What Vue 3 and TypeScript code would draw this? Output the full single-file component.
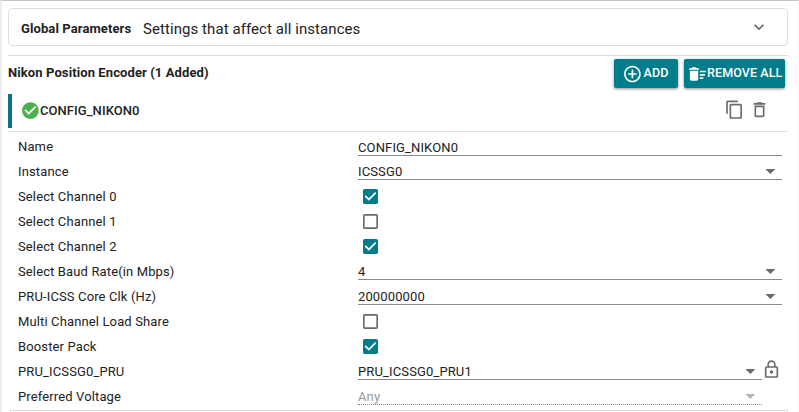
<script setup lang="ts">
interface Row {
  label: string
  kind: 'text' | 'select' | 'check'
  value?: string
  checked?: boolean
  locked?: boolean
  disabled?: boolean
  pinned?: boolean
}

const rows: Row[] = [
  { label: 'Name', kind: 'text', value: 'CONFIG_NIKON0' },
  { label: 'Instance', kind: 'select', value: 'ICSSG0' },
  { label: 'Select Channel 0', kind: 'check', checked: true },
  { label: 'Select Channel 1', kind: 'check', checked: false },
  { label: 'Select Channel 2', kind: 'check', checked: true },
  { label: 'Select Baud Rate(in Mbps)', kind: 'select', value: '4' },
  { label: 'PRU-ICSS Core Clk (Hz)', kind: 'select', value: '200000000' },
  { label: 'Multi Channel Load Share', kind: 'check', checked: false },
  { label: 'Booster Pack', kind: 'check', checked: true },
  { label: 'PRU_ICSSG0_PRU', kind: 'select', value: 'PRU_ICSSG0_PRU1', pinned: true, locked: true },
  { label: 'Preferred Voltage', kind: 'select', value: 'Any', pinned: true, disabled: true },
]

const boxOn = 'M19 3H5c-1.11 0-2 .9-2 2v14c0 1.1.89 2 2 2h14c1.11 0 2-.9 2-2V5c0-1.1-.89-2-2-2zm-9 14l-5-5 1.41-1.41L10 14.17l7.59-7.59L19 8l-9 9z'
const boxOff = 'M19 5v14H5V5h14m0-2H5c-1.1 0-2 .9-2 2v14c0 1.1.9 2 2 2h14c1.1 0 2-.9 2-2V5c0-1.1-.9-2-2-2z'
</script>

<template>
  <main class="panel">
    <section class="global">
      <strong class="global-title">Global Parameters</strong>
      <span class="global-text">Settings that affect all instances</span>
      <svg class="icon chevron" viewBox="0 0 24 24"><path d="M7.41 8.59L12 13.17l4.59-4.58L18 10l-6 6-6-6z" /></svg>
    </section>

    <header class="module">
      <h2 class="module-title">Nikon Position Encoder (1 Added)</h2>
      <button class="btn add">
        <svg class="icon" viewBox="0 0 24 24"><path d="M13 7h-2v4H7v2h4v4h2v-4h4v-2h-4V7zm-1-5C6.48 2 2 6.48 2 12s4.48 10 10 10 10-4.48 10-10S17.52 2 12 2zm0 18c-4.41 0-8-3.59-8-8s3.59-8 8-8 8 3.59 8 8-3.59 8-8 8z" /></svg>
        <span>ADD</span>
      </button>
      <button class="btn remove">
        <svg class="icon" viewBox="0 0 24 24"><path d="M15 16h4v2h-4zm0-8h7v2h-7zm0 4h6v2h-6zM3 18c0 1.1.9 2 2 2h6c1.1 0 2-.9 2-2V8H3v10zM14 5h-3l-1-1H6L5 5H2v2h12z" /></svg>
        <span>REMOVE ALL</span>
      </button>
    </header>

    <div class="instance-wrap">
      <div class="instance">
        <svg class="icon ok" viewBox="0 0 24 24"><path d="M12 2C6.48 2 2 6.48 2 12s4.48 10 10 10 10-4.48 10-10S17.52 2 12 2zm-2 15l-5-5 1.41-1.41L10 14.17l7.59-7.59L19 8l-9 9z" /></svg>
        <strong class="instance-name">CONFIG_NIKON0</strong>
        <svg class="icon copy" viewBox="0 0 24 24"><path d="M16 1H4c-1.1 0-2 .9-2 2v14h2V3h12V1zm3 4H8c-1.1 0-2 .9-2 2v14c0 1.1.9 2 2 2h11c1.1 0 2-.9 2-2V7c0-1.1-.9-2-2-2zm0 16H8V7h11v14z" /></svg>
        <svg class="icon trash" viewBox="0 0 24 24"><path d="M6 19c0 1.1.9 2 2 2h8c1.1 0 2-.9 2-2V7H6v12zM8 9h8v10H8V9zm7.5-5l-1-1h-5l-1 1H5v2h14V4z" /></svg>
      </div>
    </div>

    <div class="rows">
      <div v-for="row in rows" :key="row.label" class="row" :class="{ muted: row.disabled }">
        <label class="label">{{ row.label }}</label>
        <svg v-if="row.kind === 'check'" class="box" :class="{ on: row.checked }" viewBox="3 3 18 18">
          <path :d="row.checked ? boxOn : boxOff" />
        </svg>
        <div v-else class="field" :class="[row.kind, { pinned: row.pinned }]">
          <span class="value">{{ row.value }}</span>
          <svg v-if="row.kind === 'select'" class="caret" viewBox="0 0 24 24"><path d="M7 10l5 5 5-5z" /></svg>
        </div>
        <svg v-if="row.locked" class="icon lock" viewBox="0 0 24 24"><path d="M12 17c1.1 0 2-.9 2-2s-.9-2-2-2-2 .9-2 2 .9 2 2 2zm6-9h-1V6c0-2.76-2.24-5-5-5S7 3.24 7 6v2H6c-1.1 0-2 .9-2 2v10c0 1.1.9 2 2 2h12c1.1 0 2-.9 2-2V10c0-1.1-.9-2-2-2zM8.9 6c0-1.71 1.39-3.1 3.1-3.1s3.1 1.39 3.1 3.1v2H8.9V6zM18 20H6V10h12v10z" /></svg>
      </div>
    </div>
    <div class="next-card"></div>
  </main>
</template>

<style>
body {
  margin: 0;
  overflow: hidden;
  background: #fff;
}
</style>

<style scoped>
.panel {
  box-sizing: border-box;
  width: 799px;
  height: 412px;
  overflow: hidden;
  padding: 7px 10px 0 6px;
  border-left: 2px solid #ececec;
  border-right: 1px solid #f7f7f7;
  border-top: 1px solid #c4c4c4;
  background: #fff;
  color: #222;
  font: 13px/20px Roboto, sans-serif;
  letter-spacing: 0.13px;
}
.icon {
  flex: none;
  width: 20px;
  height: 20px;
  fill: currentColor;
}
.global {
  box-sizing: border-box;
  display: flex;
  align-items: center;
  width: 780px;
  height: 38px;
  padding: 3px 18px 0 12px;
  border: 1px solid #dedede;
  border-radius: 4px;
}
.global-title {
  width: 122px;
  font-weight: 700;
  letter-spacing: 0.1px;
}
.global-text {
  flex: 1;
  font-size: 15px;
  letter-spacing: 0.07px;
}
.chevron {
  margin-top: -4px;
  color: #666;
}
.module {
  box-sizing: border-box;
  display: flex;
  align-items: flex-start;
  width: 780px;
  height: 39px;
  margin-top: 9px;
  padding: 3px 3px 0 0;
  border-top: 1px solid #dedede;
}
.module-title {
  flex: 1;
  margin: 4px 0 0;
  font-size: 13px;
  font-weight: 700;
  line-height: 20px;
  letter-spacing: 0.1px;
}
.btn {
  box-sizing: border-box;
  display: flex;
  align-items: center;
  height: 29px;
  padding: 0;
  border: 0;
  border-radius: 2px;
  background: #007c8a;
  box-shadow: 0 1px 3px rgba(0, 0, 0, 0.45);
  color: #fff;
  font: 500 12.5px/28px Roboto, sans-serif;
  letter-spacing: 0.1px;
  white-space: nowrap;
}
.btn span {
  margin-top: -1px;
}
.btn .icon {
  transform: translate(0.4px, 0);
}
.add {
  width: 64px;
  padding-left: 8px;
  gap: 1.5px;
}
.remove {
  width: 101px;
  margin-left: 6px;
  padding-left: 3px;
}
.instance-wrap {
  box-sizing: border-box;
  width: 780px;
  height: 38px;
  border-bottom: 1px solid #dedede;
}
.instance {
  box-sizing: border-box;
  display: flex;
  align-items: center;
  height: 34px;
  padding: 0 18px 2px 8px;
  border-left: 4px solid #0b7285;
}
.ok {
  color: #4caf50;
  transform: translate(0.4px, 0.5px);
}
.instance-name {
  flex: 1;
  margin-top: 2px;
  font-weight: 500;
  letter-spacing: 0.06px;
}
.copy,
.trash {
  color: #6b6b6b;
  transform: translate(-0.5px, -0.3px);
}
.copy {
  margin-right: 5px;
}
.rows {
  padding: 2px 0 0 10px;
}
.row {
  display: flex;
  align-items: flex-start;
  height: 25px;
}
.label {
  width: 340px;
  padding-top: 3px;
}
.field {
  box-sizing: border-box;
  display: flex;
  width: 424px;
  height: 21px;
  border-bottom: 1px solid #8b8b8b;
}
.field.text {
  height: 22px;
}
.field.pinned {
  width: 404px;
}
.value {
  flex: 1;
  padding-top: 3px;
}
.field.text .value {
  padding-top: 4px;
}
.caret {
  width: 24px;
  height: 24px;
  fill: #6b6b6b;
  transform: translate(0.4px, 0);
}
.box {
  width: 15px;
  height: 15px;
  margin: 5px 0 0 5px;
  fill: #6b6b6b;
}
.box.on {
  fill: #007c8a;
}
.lock {
  color: #6b6b6b;
  transform: translate(-0.5px, 0.5px);
}
.muted .value {
  color: #999;
}
.muted .caret {
  fill: #b5b5b5;
}
.muted .field {
  border-bottom-style: dotted;
}
.next-card {
  box-sizing: border-box;
  width: 778px;
  height: 10px;
  margin: 1px 0 0 2px;
  border: 1px solid #dedede;
}
</style>
